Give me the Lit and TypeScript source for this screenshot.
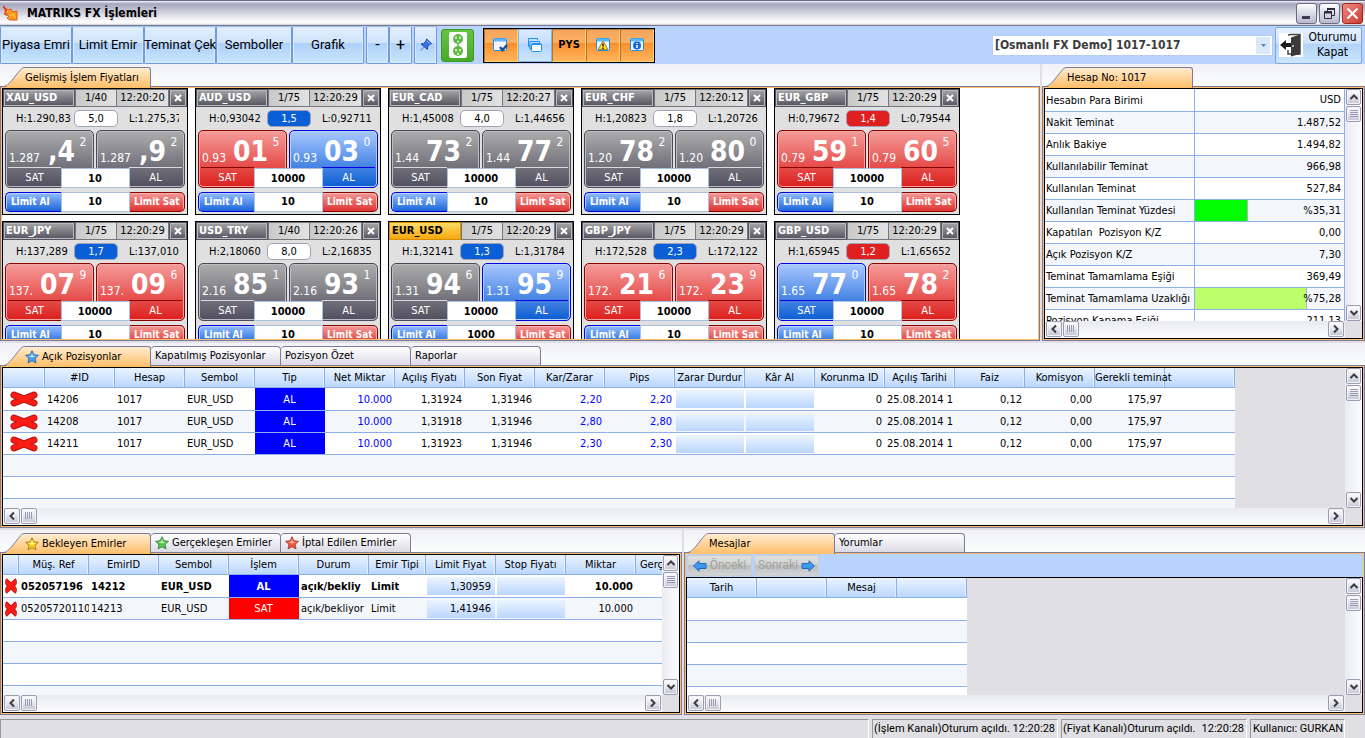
import { LitElement, html, css, svg, nothing } from "lit";
import { customElement, property } from "lit/decorators.js";
import { classMap } from "lit/directives/class-map.js";
import { styleMap } from "lit/directives/style-map.js";

type Tone = "grey" | "red" | "blue";

interface Quote {
  name: string;
  lev: string;
  time: string;
  high: string;
  low: string;
  spread: string;
  spreadTone: "plain" | "blue" | "red";
  qty: string;
  limit: string;
  sell: [string, string, string, Tone];
  buy: [string, string, string, Tone];
  active?: boolean;
}

const QUOTES: Quote[] = [
  { name: "XAU_USD", lev: "1/40", time: "12:20:20", high: "1.290,83", low: "1.275,37", spread: "5,0", spreadTone: "plain", qty: "10", limit: "10", sell: ["1.287", ",4", "2", "grey"], buy: ["1.287", ",9", "2", "grey"] },
  { name: "AUD_USD", lev: "1/75", time: "12:20:29", high: "0,93042", low: "0,92711", spread: "1,5", spreadTone: "blue", qty: "10000", limit: "10", sell: ["0.93", "01", "5", "red"], buy: ["0.93", "03", "0", "blue"] },
  { name: "EUR_CAD", lev: "1/75", time: "12:20:27", high: "1,45008", low: "1,44656", spread: "4,0", spreadTone: "plain", qty: "10000", limit: "10", sell: ["1.44", "73", "2", "grey"], buy: ["1.44", "77", "2", "grey"] },
  { name: "EUR_CHF", lev: "1/75", time: "12:20:12", high: "1,20823", low: "1,20726", spread: "1,8", spreadTone: "plain", qty: "10000", limit: "10", sell: ["1.20", "78", "2", "grey"], buy: ["1.20", "80", "0", "grey"] },
  { name: "EUR_GBP", lev: "1/75", time: "12:20:29", high: "0,79672", low: "0,79544", spread: "1,4", spreadTone: "red", qty: "10000", limit: "10", sell: ["0.79", "59", "1", "red"], buy: ["0.79", "60", "5", "red"] },
  { name: "EUR_JPY", lev: "1/75", time: "12:20:29", high: "137,289", low: "137,010", spread: "1,7", spreadTone: "blue", qty: "10000", limit: "10", sell: ["137.", "07", "9", "red"], buy: ["137.", "09", "6", "red"] },
  { name: "USD_TRY", lev: "1/40", time: "12:20:26", high: "2,18060", low: "2,16835", spread: "8,0", spreadTone: "plain", qty: "10000", limit: "10", sell: ["2.16", "85", "1", "grey"], buy: ["2.16", "93", "1", "grey"] },
  { name: "EUR_USD", lev: "1/75", time: "12:20:29", high: "1,32141", low: "1,31784", spread: "1,3", spreadTone: "blue", qty: "10000", limit: "1000", sell: ["1.31", "94", "6", "grey"], buy: ["1.31", "95", "9", "blue"], active: true },
  { name: "GBP_JPY", lev: "1/75", time: "12:20:29", high: "172,528", low: "172,122", spread: "2,3", spreadTone: "blue", qty: "10000", limit: "10", sell: ["172.", "21", "6", "red"], buy: ["172.", "23", "9", "red"] },
  { name: "GBP_USD", lev: "1/75", time: "12:20:29", high: "1,65945", low: "1,65652", spread: "1,2", spreadTone: "red", qty: "10000", limit: "10", sell: ["1.65", "77", "0", "blue"], buy: ["1.65", "78", "2", "red"] },
];

const ACCOUNT: { label: string; value: string; pct?: number; color?: string }[] = [
  { label: "Hesabın Para Birimi", value: "USD" },
  { label: "Nakit Teminat", value: "1.487,52" },
  { label: "Anlık Bakiye", value: "1.494,82" },
  { label: "Kullanılabilir Teminat", value: "966,98" },
  { label: "Kullanılan Teminat", value: "527,84" },
  { label: "Kullanılan Teminat Yüzdesi", value: "%35,31", pct: 35.31, color: "#00ff00" },
  { label: "Kapatılan \u00a0Pozisyon K/Z", value: "0,00" },
  { label: "Açık Pozisyon K/Z", value: "7,30" },
  { label: "Teminat Tamamlama Eşiği", value: "369,49" },
  { label: "Teminat Tamamlama Uzaklığı", value: "%75,28", pct: 75.28, color: "#bdfe6b" },
  { label: "Pozisyon Kapama Eşiği", value: "211,13" },
];

const POS_HEAD = ["#ID", "Hesap", "Sembol", "Tip", "Net Miktar", "Açılış Fiyatı", "Son Fiyat", "Kar/Zarar", "Pips", "Zarar Durdur", "Kâr Al", "Korunma ID", "Açılış Tarihi", "Faiz", "Komisyon", "Gerekli teminat", ""];
const POS_KIND = ["l", "l", "l", "buy", "rb", "r", "r", "rb", "rb", "edit", "edit", "r", "l", "r", "r", "r", "l"];
const POSITIONS = [
  ["14206", "1017", "EUR_USD", "AL", "10.000", "1,31924", "1,31946", "2,20", "2,20", "", "", "0", "25.08.2014 1", "0,12", "0,00", "175,97", ""],
  ["14208", "1017", "EUR_USD", "AL", "10.000", "1,31918", "1,31946", "2,80", "2,80", "", "", "0", "25.08.2014 1", "0,12", "0,00", "175,97", ""],
  ["14211", "1017", "EUR_USD", "AL", "10.000", "1,31923", "1,31946", "2,30", "2,30", "", "", "0", "25.08.2014 1", "0,12", "0,00", "175,97", ""],
];

const ORD_HEAD = ["Müş. Ref", "EmirID", "Sembol", "İşlem", "Durum", "Emir Tipi", "Limit Fiyat", "Stop Fiyatı", "Miktar", "Gerçekleşen"];
const ORDERS = [
  { bold: true, cells: ["052057196", "14212", "EUR_USD", "AL", "açık/bekliy", "Limit", "1,30959", "", "10.000", ""], kinds: ["l", "l", "l", "buy", "l", "l", "edit", "edit", "r", "r"] },
  { bold: false, cells: ["05205720110", "14213", "EUR_USD", "SAT", "açık/bekliyor", "Limit", "1,41946", "", "10.000", ""], kinds: ["l", "l", "l", "sell", "l", "l", "edit", "edit", "r", "r"] },
];

const base = css`
  *, *::before, *::after { box-sizing: border-box; }
  :host {
    --text: "DejaVu Sans Condensed", "DejaVu Sans", sans-serif;
    --bar: Roboto, "Liberation Sans", sans-serif;
  }
  button, input, select {
    font: inherit; color: inherit; margin: 0; padding: 0; border: 0;
    border-radius: 0; background: none; min-width: 0;
  }
  svg { display: block; flex: none; }
`;

@customElement("fx-scroll")
export class FxScroll extends LitElement {
  @property({ type: Boolean, reflect: true }) vertical = false;

  static styles = [base, css`
    :host {
      display: flex; gap: 1px; padding: 0 1px; min-width: 0; min-height: 0;
      background: linear-gradient(#e9ebf1, #fdfdff);
    }
    :host([vertical]) {
      flex-direction: column; padding: 0 1px;
      background: linear-gradient(90deg, #e9ebf1, #fdfdff);
    }
    .btn {
      width: 16px; height: 16px; flex: none; display: grid; place-items: center;
      border: 1px solid #9c9cb0; border-radius: 2px;
      background: linear-gradient(#ffffff, #e6e6ee 50%, #c3c3d4);
      box-shadow: inset 0 0 0 1px #f4f4f8;
    }
    :host([vertical]) .btn { width: 15px; }
    .track { flex: 1; }
  `];

  render() {
    const v = this.vertical;
    const arrow = (d: string) => svg`<path d=${d} fill="none" stroke="#3c3c44" stroke-width="2"></path>`;
    return html`
      <button class="btn" aria-label=${v ? "Yukarı" : "Sola"}>
        <svg width="10" height="10">${arrow(v ? "M1.5 7 L5 3.5 L8.500 7" : "M7 1.500 L3.500 5 L7 8.500")}</svg>
      </button>
      <button class="btn" aria-label="Kaydır">
        <svg width="10" height="10"><path stroke="#9a9ab4" stroke-width="1" d=${v ? "M1 1.500H9M1 3.500H9M1 5.500H9M1 7.500H9" : "M1.500 1V8M3.500 1V8M5.500 1V8M7.500 1V8"}></path></svg>
      </button>
      <div class="track"></div>
      <button class="btn" aria-label=${v ? "Aşağı" : "Sağa"}>
        <svg width="10" height="10">${arrow(v ? "M1.500 3 L5 6.500 L8.500 3" : "M3 1.500 L6.500 5 L3 8.500")}</svg>
      </button>`;
  }
}

@customElement("price-card")
export class PriceCard extends LitElement {
  @property({ attribute: false }) quote!: Quote;

  static styles = [base, css`
    :host {
      display: grid; grid-template-rows: 18px 23px 58px 24px;
      width: 186px; height: 127px; border: 1px solid #000; background: #e0e0e0;
      color: #000; overflow: hidden; align-content: start;
      font: 11px/14px var(--text);
    }
    .head { display: grid; grid-template-columns: 72px 41px 53px 1fr; background: #8e8e98; }
    .head > * {
      display: flex; align-items: center; border: 1px solid #77777f;
      background: linear-gradient(90deg, #c9c9c9, #e2e2e2); overflow: hidden; white-space: nowrap;
    }
    .head .name {
      padding-left: 2px; color: #fff; font-weight: bold;
      background: linear-gradient(#a5a5a8, #55535f); border-color: #55535f;
      box-shadow: inset 0 0 0 1px #b9b9c0;
    }
    .head .name.active { color: #000; background: linear-gradient(#ffdc66, #f5a80c); border-color: #d89000; box-shadow: none; }
    .head .lev { justify-content: center; border-right-width: 0; }
    .head .time { justify-content: center; }
    .head .close {
      justify-content: center; background: linear-gradient(#a5a5a8, #55535f); border-color: #55535f;
      box-shadow: inset 0 0 0 1px #b9b9c0;
    }
    .range { display: grid; grid-template-columns: 71px 44px 1fr; align-items: center; padding-right: 8px; white-space: nowrap; }
    .high { padding-left: 13px; }
    .low { padding-left: 11px; overflow: hidden; }
    .pill { height: 17px; border: 1px solid #a3a2b8; border-radius: 5px; text-align: center; background: #fff; line-height: 15px; }
    .pill.blue { background: #0a5fd6; color: #fff; }
    .pill.red { background: #e02020; color: #fff; }
    .prices { display: grid; grid-template: 58px / 1fr 1fr; column-gap: 2px; padding: 0 2px; }
    .price {
      display: grid; grid-template: 36px 20px / minmax(0, 1fr); color: #fff;
      border: 1px solid var(--edge); border-radius: 5px; text-align: left;
      box-shadow: inset 0 0 0 1px var(--glow);
      background: linear-gradient(var(--from), var(--to)); padding: 0;
    }
    .price.sell { grid-area: 1 / 1; }
    .price.buy { grid-area: 1 / 2; }
    .grey { --from: #adadad; --to: #514f5e; --edge: #4c4a58; --glow: #bcbcc4; }
    .red { --from: #f59c9a; --to: #dc1f1c; --edge: #8c0000; --glow: #f0a8a6; }
    .blue { --from: #a9c8ff; --to: #0c5dd2; --edge: #0000e0; --glow: #b6d2ff; }
    .digits { display: grid; grid-template: 32px / 1fr auto 16px; padding: 4px 2px 0 3px; }
    .pre { font-size: 12px; line-height: 14px; align-self: end; padding-bottom: 2px; white-space: nowrap; width: 0; }
    .big { font-size: 28px; line-height: 34px; font-weight: bold; }
    .sup { font-size: 12px; line-height: 14px; text-align: center; }
    .side { width: 53px; margin-left: 2px; border-top: 1px solid #d9d9e0; text-align: center; line-height: 20px; }
    .buy .side { margin-left: 0; margin-right: 2px; justify-self: end; }
    .red .side { border-color: #8c0000; }
    .blue .side { border-color: #0000e0; }
    .qty { grid-area: 1 / 1 / 2 / 3; justify-self: center; align-self: end; width: 69px; height: 20px; }
    .qty, .lim { background: #fff; border: 1px solid #a9c1de; text-align: center; font-weight: bold; }
    .limits { display: grid; grid-template-columns: 1fr 69px 1fr; padding: 4px 2px 0; }
    .act { color: #fff; font-weight: bold; font-size: 10px; border: 1px solid; white-space: nowrap; overflow: hidden; }
    .act.bid { border-color: #0000e0; border-right: 0; border-radius: 5px 0 0 5px; padding-right: 6px; background: linear-gradient(#92bcff, #1b66d8); box-shadow: inset 1px 1px 0 #b6d2ff; }
    .act.ask { border-color: #8c0000; border-left: 0; border-radius: 0 5px 5px 0; background: linear-gradient(#f59a98, #dd3330); box-shadow: inset -1px 1px 0 #f3b5b3; }
  `];

  private side(kind: "sell" | "buy", data: [string, string, string, Tone]) {
    const [pre, big, sup, tone] = data;
    return html`
      <button class="price ${kind} ${tone}">
        <span class="digits"><span class="pre">${pre}</span><span class="big">${big}</span><span class="sup">${sup}</span></span>
        <span class="side">${kind === "sell" ? "SAT" : "AL"}</span>
      </button>`;
  }

  render() {
    const q = this.quote;
    return html`
      <div class="head">
        <span class=${classMap({ name: true, active: !!q.active })}>${q.name}</span>
        <span class="lev">${q.lev}</span>
        <span class="time">${q.time}</span>
        <button class="close" aria-label="Kapat">
          <svg width="8" height="8"><path d="M1 1 L7 7 M7 1 L1 7" stroke="#fff" stroke-width="2"></path></svg>
        </button>
      </div>
      <div class="range">
        <span class="high">H:${q.high}</span>
        <span class="pill ${q.spreadTone}">${q.spread}</span>
        <span class="low">L:${q.low}</span>
      </div>
      <div class="prices">
        ${this.side("sell", q.sell)}${this.side("buy", q.buy)}
        <input class="qty" aria-label="Miktar" .value=${q.qty} />
      </div>
      <div class="limits">
        <button class="act bid">Limit Al</button>
        <input class="lim" aria-label="Limit miktar" .value=${q.limit} />
        <button class="act ask">Limit Sat</button>
      </div>`;
  }
}

const star = (fill: string, light: string, edge: string) => html`
  <svg width="14" height="14" viewBox="0 0 14 14">
    <path d="M7 0.700 L8.900 4.800 L13.400 5.300 L10.100 8.300 L11 12.900 L7 10.700 L3 12.900 L3.900 8.300 L0.600 5.300 L5.100 4.800 Z" fill=${fill} stroke=${edge} stroke-width="1" stroke-linejoin="round"></path>
    <path d="M7 3 L8.200 5.800 L11 6.200 L7 7.500 L3 6.200 L5.800 5.800 Z" fill=${light}></path>
  </svg>`;
const STARS = {
  blue: star("#4aa0e8", "#b5e0ff", "#2f6fb0"),
  yellow: star("#f7cf1a", "#fff3a0", "#a98420"),
  green: star("#53c648", "#b6f0a8", "#4a8a50"),
  red: star("#f2553a", "#ffb09a", "#a8483c"),
};

interface Tab { text: string; icon?: unknown; }

@customElement("app-root")
export class AppRoot extends LitElement {
  static styles = [base, css`
    :host {
      display: grid; height: 100vh; overflow: hidden;
      grid-template-rows: auto auto minmax(0, 279fr) minmax(0, 187fr) minmax(0, 185fr) auto;
      background: #e0dfe8; color: #000; font: 11px/14px var(--text);
    }
    .title {
      display: flex; align-items: center; gap: 2px; height: 26px; padding: 0 2px 0 3px;
      border-top: 1px solid #6f6d8c; border-bottom: 1px solid #7a7a92;
      background: linear-gradient(#f4f4f8, #a6a5c0 12%, #b9b9cd 30%, #e6e6ee 65%, #ffffff 92%, #c8c8d4);
    }
    .title h1 {
      flex: 1; margin: 0 0 0 6px; font: bold 12px/16px var(--text);
      text-shadow: 1px 1px 0 #c9c9d6;
    }
    .win { width: 21px; height: 21px; display: grid; place-items: center; border: 1px solid #6c6b86; border-radius: 3px; background: linear-gradient(#fdfdff, #b9b9cc); }
    .win.shut { border-color: #9c2a22; background: linear-gradient(135deg, #ee8a80, #c93c34); }
    .bar { display: flex; align-items: center; height: 38px; padding-right: 3px; background: #b8d4fe; }
    .tool {
      height: 38px; width: 72px; flex: none; white-space: nowrap; display: flex; align-items: center; justify-content: center;
      border: 1px solid #6f9bd8; border-top-color: #9bbdea; border-radius: 2px;
      background: linear-gradient(#e3f0fe, #cfe3fb 44%, #aed0fa 45%, #c9e6fc);
      box-shadow: inset 0 0 0 1px #d9eafd;
      font: 13px/16px var(--bar);
    }
    .tool.wide { width: 76px; }
    .tool.mini { width: 23px; font-size: 16px; }
    .tool.gap { margin-left: 2px; }
    .plug { width: 33px; height: 33px; margin: 0 9px 0 4px; display: grid; place-items: center; border: 1px solid #3c9a1e; border-radius: 3px; background: linear-gradient(#66c544, #48a828); }
    .modes { display: flex; border: 1px solid #000; }
    .mode {
      width: 34px; height: 33px; display: grid; place-items: center; font-weight: bold;
      border: 1px solid #a8763a; border-right-color: #ffcf6a; border-bottom-color: #ffcf6a;
      background: linear-gradient(#f5a55c, #fbb163 40%, #f98f2a 42%, #ffb45e);
    }
    .mode.on { border-color: #84b4e8; background: linear-gradient(#dcebfd, #c2dcfb 45%, #b2d3fa 46%, #cde6fd); }
    .fill { flex: 1; }
    .combo { display: grid; grid-template-columns: 1fr 16px; width: 281px; height: 21px; margin-right: 2px; border: 1px solid #b4cdf0; background: #fff; align-items: center; }
    .combo select { grid-area: 1 / 1 / 2 / 3; appearance: none; height: 19px; padding-left: 2px; font: bold 12px/17px var(--text); color: #3c3c3c; }
    .combo svg { grid-area: 1 / 2; pointer-events: none; background: #dbe8fb; }
    .logout {
      display: flex; align-items: center; gap: 4px; width: 87px; height: 37px; padding: 0 3px;
      border: 1px solid #7fa9dc; border-radius: 2px;
      background: linear-gradient(#e6f1fe, #d0e3fb 44%, #b2d2fa 45%, #cbe7fd); font: 12px/15px var(--text);
    }
    .logout span { flex: 1; text-align: center; }
    .row { display: grid; column-gap: 2px; min-height: 0; }
    .row.top { grid-template-columns: minmax(0, 1040fr) minmax(0, 323fr); margin-bottom: 2px; }
    .row.mid { margin-bottom: 2px; grid-template-columns: minmax(0, 1fr); }
    .row.low { grid-template-columns: minmax(0, 682fr) minmax(0, 681fr); }
    .panel { display: grid; grid-template-rows: 22px minmax(0, 1fr); min-height: 0; min-width: 0; }
    .tabs { display: flex; align-items: flex-end; padding-left: 4px; background: linear-gradient(#f1f1f6, #fbfdfd); }
    .tab { display: flex; align-items: center; height: 19px; text-align: left; white-space: nowrap; }
    .tab.on { height: 21px; margin-bottom: -2px; position: relative; width: 147px; }
    .tab.on .body { flex: 1; height: 21px; border: 1px solid #7b7b9c; border-width: 1px 1px 0 0; border-radius: 0 3px 0 0; background: linear-gradient(#ffecd0, #ffbe68); }
    .body { display: flex; align-items: center; gap: 3px; }
    .tab.off { width: 130px; border: 1px solid #7b7b9c; border-width: 1px 1px 0 0; border-radius: 4px 4px 0 0; background: linear-gradient(#ffffff, #dcdbe6); padding-left: 4px; }
    .frame { border: 1px solid #7b7b9c; min-height: 0; min-width: 0; display: grid; grid-template: minmax(0, 1fr) / minmax(0, 1fr); }
    .orange { border: 1px solid #ffbe68; min-height: 0; min-width: 0; display: grid; grid-template: minmax(0, 1fr) / minmax(0, 1fr); background: #fff; }
    .orange.with-bar { grid-template-rows: 23px minmax(0, 1fr); }
    .cards { display: flex; flex-wrap: wrap; gap: 6px 7px; align-content: flex-start; overflow: hidden; }
    .sheet { display: grid; grid-template: minmax(0, 1fr) 17px / minmax(0, 1fr) 17px; border: 1px solid #000; background: #e0dfe3; min-height: 0; }
    .view { overflow: hidden; min-height: 0; }
    table { border-collapse: separate; border-spacing: 0; table-layout: fixed; background: #fff; }
    table.acct { width: 100%; }
    table.pos { width: 1232px; }
    table.ord { width: 703px; }
    table.msg { width: 280px; }
    .c42 { width: 42px; }
    .c16 { width: 16px; }
    .c57 { width: 57px; }
    .c70 { width: 70px; }
    th {
      height: 20px; padding: 1px 0 0; font-weight: normal; text-align: center; white-space: nowrap;
      border-right: 1px solid #8cb0e6; border-bottom: 1px solid #8cb0e6;
      background: linear-gradient(#eaf4ff, #bbd7ff); box-shadow: inset -1px 0 0 #e4f0ff;
    }
    td { height: 22px; padding: 1px 3px 0 2px; border-bottom: 1px solid #8cb0e6; white-space: nowrap; overflow: hidden; }
    tbody tr:first-child td { height: 23px; }
    tbody tr:nth-child(even) td { background: #f3f7fb; }
    .acct th, .acct td { border-right: 1px solid #8cb0e6; }
    .acct tbody th { height: 22px; background: transparent; box-shadow: none; text-align: left; padding-left: 1px; }
    .acct tbody tr:first-child th { height: 23px; }
    .acct tbody tr:nth-child(even) { background: #f3f7fb; }
    tbody td.r, .acct td { text-align: right; }
    .acct td { padding: 0; }
    .meter { display: grid; height: 21px; align-items: center; }
    .meter > * { grid-area: 1 / 1; }
    .meter span { padding-right: 3px; }
    .fillbar { height: 21px; border-right: 1px solid #b4b4b4; }
    .blue { color: #0000ff; }
    tbody tr td.buy { background: #0000ff; color: #fff; text-align: center; }
    tbody tr td.sell { background: #ff0000; color: #fff; text-align: center; }
    tbody td.x { padding: 0; background: #fff; }
    .x button { display: grid; width: 100%; place-items: center; }
    td.edit { padding: 0 1px; }
    .edit input { display: block; width: 100%; height: 18px; text-align: right; padding-right: 4px; background: linear-gradient(#ecf5ff, #bad6ff); }
    .strong td { font-weight: bold; }
    .strong td.edit { font-weight: normal; }
    .nav { display: flex; gap: 2px; background: #b8d4fe; padding: 1px; }
    .nav button { display: flex; align-items: center; justify-content: center; gap: 3px; width: 65px; height: 21px; color: #a3a39a; font: 12px/15px var(--bar); border: 1px solid #c8cdd0; background: linear-gradient(#dfe0e0, #d0d1d2 48%, #bcbdbf 50%, #d3d4d5); }
    .status { display: flex; gap: 3px; padding: 4px 20px 0 0; background: #e0dfe3; height: 23px; font-family: var(--bar); }
    .status span { border: 1px solid #98979f; border-right-color: #fff; border-bottom: 0; white-space: pre; line-height: 18px; padding-left: 1px; }
    .status .grow { flex: 1; }
    .status .chan { width: 186px; display: flex; justify-content: space-between; padding-right: 2px; }
    .status b { font-weight: normal; }
    .status .user { width: 95px; padding-left: 2px; }
  `];

  private tabs(list: Tab[]) {
    return html`<div class="tabs" role="tablist">
      ${list.map((t, i) => i === 0
        ? html`<button class="tab on" role="tab" aria-selected="true">
            <svg width="21" height="21" viewBox="0 0 21 21">
              <defs><linearGradient id="g" x1="0" y1="0" x2="0" y2="1"><stop offset="0" stop-color="#ffecd0"></stop><stop offset="1" stop-color="#ffbe68"></stop></linearGradient></defs>
              <path d="M0 21 C5 18 8 13 13 7 C17 2 18 0.500 21 0.500 V21 Z" fill="url(#g)"></path>
              <path d="M0 19.500 C5 18 8 13 13 7 C17 2 18 0.500 21 0.500" fill="none" stroke="#7b7b9c"></path>
            </svg><span class="body">${t.icon ?? nothing}<span>${t.text}</span></span></button>`
        : html`<button class="tab off" role="tab" aria-selected="false"><span class="body">${t.icon ?? nothing}<span>${t.text}</span></span></button>`)}
    </div>`;
  }

  private sheet(content: unknown) {
    return html`<div class="sheet">
      <div class="view">${content}</div>
      <fx-scroll vertical></fx-scroll>
      <fx-scroll></fx-scroll>
    </div>`;
  }

  private cell(text: string, kind: string) {
    if (kind === "edit") return html`<td class="edit"><input aria-label="Fiyat" .value=${text} /></td>`;
    if (kind === "rb") return html`<td class="r blue">${text}</td>`;
    return html`<td class=${kind}>${text}</td>`;
  }

  private blanks(n: number, cols: number) {
    return Array.from({ length: n }, () => html`<tr><td colspan=${cols}></td></tr>`);
  }

  private cross(w: number) {
    return html`<td class="x"><button aria-label="Sil">
      <svg width=${w} height="16" viewBox="0 0 28 16" preserveAspectRatio="none">
        <path d="M4 4 L24 12 M24 4 L4 12" stroke="#b81414" stroke-width="7" stroke-linecap="round"></path>
        <path d="M4 4 L24 12 M24 4 L4 12" stroke="#fb1c14" stroke-width="5" stroke-linecap="round"></path>
      </svg></button></td>`;
  }

  render() {
    return html`
      <header class="title">
        <svg width="16" height="18" viewBox="0 0 16 18">
          <path d="M1 3 L5 6 L8 5 L10 8 L14 7 V16 H7 L4 14 L6 12 L3 11 L5 9 Z" fill="#ff9a1f" stroke="#e0561a"></path>
          <path d="M0 2 L5 8 L3 9 M6 12 L10 10 L12 14" fill="none" stroke="#ffd23a" stroke-width="1"></path>
          <path d="M0 2 L3 6 L2 11" fill="none" stroke="#e8401c" stroke-width="2"></path>
        </svg>
        <h1>MATRIKS FX İşlemleri</h1>
        <button class="win" aria-label="Simge durumuna küçült"><svg width="15" height="15"><path d="M3 10h8v3H3z" fill="#3b3b50"></path></svg></button>
        <button class="win" aria-label="Geri yükle"><svg width="15" height="15"><path d="M5.500 5V2.500H12.500V9.500H10M2.500 5.500H9.500V12.500H2.500Z" fill="none" stroke="#2b2b3c"></path><path d="M5 3h8M2 6.500h8" stroke="#2b2b3c" stroke-width="2"></path></svg></button>
        <button class="win shut" aria-label="Pencereyi kapat"><svg width="15" height="15"><path d="M2.500 2.500 L12.500 12.500 M12.500 2.500 L2.500 12.500" stroke="#fff" stroke-width="2"></path></svg></button>
      </header>

      <nav class="bar">
        <button class="tool">Piyasa Emri</button>
        <button class="tool">Limit Emir</button>
        <button class="tool">Teminat Çek</button>
        <button class="tool wide">Semboller</button>
        <button class="tool">Grafik</button>
        <button class="tool mini gap">-</button>
        <button class="tool mini">+</button>
        <button class="tool mini gap" aria-label="Sabitle">
          <svg width="14" height="14" viewBox="0 0 14 14"><path d="M1.500 12.500 L5 9" stroke="#8aa0c8" stroke-width="1.500"></path><path d="M2 6 L4.500 5.500 L7 3.500 L7.500 1 L12.500 5.500 L10.500 6.500 L8.500 9 L8.500 11.500 Z" fill="#3a6fe0" stroke="#1e48b8"></path><path d="M8 3 L11 5.500" stroke="#a8c4ff"></path></svg>
        </button>
        <button class="plug" aria-label="Bağlantı">
          <svg width="18" height="26" viewBox="0 0 18 26">
            <rect width="18" height="26" rx="2" fill="#fff"></rect>
            <circle cx="9" cy="7" r="5" fill="#5fb845"></circle><circle cx="9" cy="19" r="5" fill="#5fb845"></circle>
            <path d="M7 4.500v2.500M11 4.500v2.500M7 17v2.500M11 17v2.500M8 9.500h2M8 22h2" stroke="#e8f8e0" stroke-width="1.500"></path>
            <circle cx="9" cy="13" r="1" fill="#5fb845"></circle>
          </svg>
        </button>
        <div class="modes">
          <button class="mode" aria-label="Onay"><svg width="16" height="16"><rect x="0.500" y="1.500" width="13" height="12" rx="1" fill="#f4f4fc" stroke="#1d8ff0"></rect><path d="M1 3h12" stroke="#5cb8ff" stroke-width="3"></path><path d="M7 10 L9.500 13 L14 8" fill="none" stroke="#1c4f96" stroke-width="2.500"></path></svg></button>
          <button class="mode on" aria-label="Pencereler"><svg width="16" height="16"><path d="M3 9.500H1.500V1.500H10.500V3M4 12H3V4.500H12.500V6" fill="none" stroke="#1d8ff0"></path><rect x="4.500" y="6.500" width="10" height="8" rx="1" fill="#f4faff" stroke="#1d8ff0"></rect><path d="M5 7.500h9" stroke="#1d8ff0"></path></svg></button>
          <button class="mode">PYS</button>
          <button class="mode" aria-label="Uyarı"><svg width="16" height="16"><rect x="1.500" y="1.500" width="13" height="12" rx="1" fill="#f4f4fc" stroke="#1d8ff0"></rect><path d="M2 3h12" stroke="#5cb8ff" stroke-width="3"></path><path d="M8 4 L13 12.500 H3 Z" fill="#ffd92e" stroke="#a8842a"></path><path d="M8 6.500v3M8 10.500v1.500" stroke="#222" stroke-width="1.500"></path></svg></button>
          <button class="mode" aria-label="Bilgi"><svg width="16" height="16"><rect x="1.500" y="1.500" width="13" height="12" rx="1" fill="#f4f4fc" stroke="#1d8ff0"></rect><path d="M2 3h12" stroke="#5cb8ff" stroke-width="3"></path><circle cx="8" cy="8.500" r="4" fill="#1668d8"></circle><path d="M8 6v1M8 8v3" stroke="#fff" stroke-width="1.500"></path></svg></button>
        </div>
        <div class="fill"></div>
        <label class="combo">
          <select aria-label="Hesap"><option>[Osmanlı FX Demo] 1017-1017</option></select>
          <svg width="14" height="17"><path d="M5 7h5l-2.500 3z" fill="#4a86c4"></path></svg>
        </label>
        <button class="logout">
          <svg width="24" height="24" viewBox="0 0 24 24"><rect width="24" height="24" fill="#fff"></rect><path d="M9 2 L12 1.500 H21 V21 H9 V17" fill="none" stroke="#444" stroke-width="1.500"></path><path d="M12 4.500 L21 1.500 V21 L12 23.500 Z" fill="#3c3a38"></path><path d="M1 12 L7 7 V10 H12 V14 H7 V17 Z" fill="#1c1c1c"></path><path d="M14 12v2" stroke="#ddd" stroke-width="1.500"></path></svg>
          <span>Oturumu Kapat</span>
        </button>
      </nav>

      <div class="row top">
        <section class="panel">
          ${this.tabs([{ text: "Gelişmiş İşlem Fiyatları" }])}
          <div class="frame"><div class="orange"><div class="cards">
            ${QUOTES.map((q) => html`<price-card .quote=${q}></price-card>`)}
          </div></div></div>
        </section>
        <section class="panel">
          ${this.tabs([{ text: "Hesap No: 1017" }])}
          <div class="frame"><div class="orange">${this.sheet(html`
            <table class="acct"><tbody>
              ${ACCOUNT.map((a) => html`<tr><th scope="row">${a.label}</th><td><div class="meter">
                ${a.pct ? html`<div class="fillbar" style=${styleMap({ width: `${a.pct}%`, background: a.color ?? "" })}></div>` : nothing}
                <span>${a.value}</span></div></td></tr>`)}
            </tbody></table>`)}</div></div>
        </section>
      </div>

      <div class="row mid">
        <section class="panel">
          ${this.tabs([{ text: "Açık Pozisyonlar", icon: STARS.blue }, { text: "Kapatılmış Pozisyonlar" }, { text: "Pozisyon Özet" }, { text: "Raporlar" }])}
          <div class="frame"><div class="orange">${this.sheet(html`
            <table class="pos">
              <colgroup><col class="c42" />${POS_HEAD.map(() => html`<col class="c70" />`)}</colgroup>
              <thead><tr><th></th>${POS_HEAD.map((h) => html`<th>${h}</th>`)}</tr></thead>
              <tbody>
                ${POSITIONS.map((r) => html`<tr>${this.cross(28)}${r.map((c, i) => this.cell(c, POS_KIND[i]))}</tr>`)}
                ${this.blanks(3, 18)}
              </tbody>
            </table>`)}</div></div>
        </section>
      </div>

      <div class="row low">
        <section class="panel">
          ${this.tabs([{ text: "Bekleyen Emirler", icon: STARS.yellow }, { text: "Gerçekleşen Emirler", icon: STARS.green }, { text: "İptal Edilen Emirler", icon: STARS.red }])}
          <div class="frame"><div class="orange">${this.sheet(html`
            <table class="ord">
              <colgroup><col class="c16" />${ORD_HEAD.map((_, i) => html`<col class=${i === 5 ? "c57" : "c70"} />`)}</colgroup>
              <thead><tr><th></th>${ORD_HEAD.map((h) => html`<th>${h}</th>`)}</tr></thead>
              <tbody>
                ${ORDERS.map((o) => html`<tr class=${o.bold ? "strong" : ""}>${this.cross(12)}${o.cells.map((c, i) => this.cell(c, o.kinds[i]))}</tr>`)}
                ${this.blanks(4, 11)}
              </tbody>
            </table>`)}</div></div>
        </section>
        <section class="panel">
          ${this.tabs([{ text: "Mesajlar" }, { text: "Yorumlar" }])}
          <div class="frame"><div class="orange with-bar">
            <div class="nav">
              <button disabled><svg width="14" height="12"><path d="M0.500 6 L6 0.800 V3.500 H13 V8.500 H6 V11.200 Z" fill="#3c9af0" stroke="#2468b8"></path></svg>Önceki</button>
              <button disabled>Sonraki<svg width="14" height="12"><path d="M13.500 6 L8 0.800 V3.500 H1 V8.500 H8 V11.200 Z" fill="#3c9af0" stroke="#2468b8"></path></svg></button>
            </div>
            ${this.sheet(html`
            <table class="msg">
              <thead><tr><th>Tarih</th><th></th><th>Mesaj</th><th></th></tr></thead>
              <tbody>${this.blanks(5, 4)}</tbody>
            </table>`)}</div></div>
        </section>
      </div>

      <footer class="status">
        <span class="grow"></span>
        <span class="chan"><b>(İşlem Kanalı)Oturum açıldı.</b><b>12:20:28</b></span>
        <span class="chan"><b>(Fiyat Kanalı)Oturum açıldı.</b><b>12:20:28</b></span>
        <span class="user">Kullanıcı: GURKAN</span>
      </footer>`;
  }
}
